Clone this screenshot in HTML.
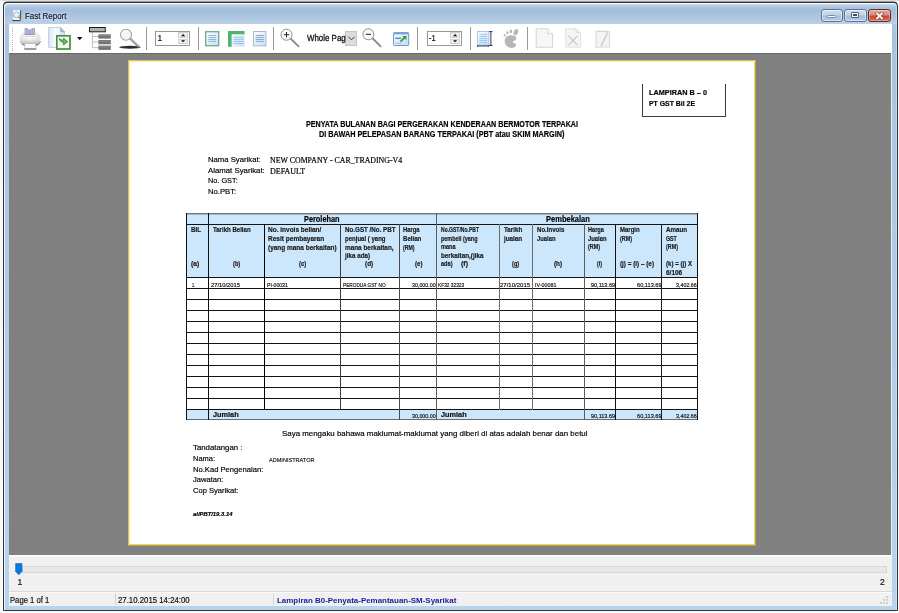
<!DOCTYPE html>
<html><head><meta charset="utf-8"><title>Fast Report</title>
<style>
html,body{margin:0;padding:0}
body{width:899px;height:613px;position:relative;overflow:hidden;background:linear-gradient(#dedede 0,#dedede 1px,#f8f8f8 1px);font-family:"Liberation Sans",sans-serif}
div,span,svg{position:absolute;box-sizing:border-box}
.t{white-space:nowrap;line-height:1;transform-origin:0 50%;color:#000;-webkit-text-stroke:.18px currentColor}
#win{left:3px;top:1px;width:895px;height:610px;border-radius:5px 5px 1px 1px;background:linear-gradient(#9a9c9e 0,#9a9c9e 1px,#30343a 1px)}
#frame{left:4px;top:3px;width:893px;height:607px;border-radius:4px 4px 0 0;box-shadow:inset 1px 1px 0 rgba(255,255,255,.75),inset -1px 0 0 rgba(255,255,255,.35);background:linear-gradient(#dfe9f4 0,#b3c9e2 3px,#a3bddb 7px,#a9c2de 12px,#bdd1e7 21px,#a9c3e0 22px,#aac4e0 60px,#b0cbe7 300px,#b8d3ec 607px)}
#client{left:9px;top:24px;width:883px;height:582px;background:#f0f0f0}
#tb{left:0;top:0;width:883px;height:29px;background:#fff}
#ws{left:0;top:29px;width:882px;height:502px;background:#808080;border-top:1px solid #6a6a6a}
#page{left:119px;top:6px;width:628px;height:486px;background:#fff;border:1px solid;border-color:#e2c260 #bf9f3e #bf9f3e #e2c260;box-shadow:inset 1px 1px 0 #f9ecb4,inset -1px -1px 0 #eed676}
.ln{background:#141414}
.hb{background:#cce6fb}
.sep{width:1px;top:3px;height:23px;background:#9a9a9a}
.cb{top:9px;height:13px;border:1px solid #5d7594;border-radius:3px}
#texts{left:0;top:0;width:899px;height:613px;will-change:transform}

</style></head>
<body>
<div id="win"></div>
<div id="frame"></div>
<!-- caption buttons -->
<div class="cb" style="left:821px;width:22px;background:linear-gradient(#cfdded 0,#bfd2e8 46%,#a6bedb 54%,#b4cae4 100%);box-shadow:inset 0 0 0 1px rgba(255,255,255,.5)"><div style="left:5px;top:5px;width:9px;height:3px;background:#fdfdfd;border:1px solid #7a88a0;border-radius:1.5px"></div></div>
<div class="cb" style="left:844px;width:23px;background:linear-gradient(#cfdded 0,#bfd2e8 46%,#a6bedb 54%,#b4cae4 100%);box-shadow:inset 0 0 0 1px rgba(255,255,255,.5)"><div style="left:6px;top:2px;width:8px;height:6px;background:#fff;border:1px solid #55627a;border-radius:1px"><div style="left:1px;top:1px;width:4px;height:2px;background:#3e4a60"></div></div></div>
<div class="cb" style="left:868px;width:23px;border-color:#5a2b2e;background:linear-gradient(#e5a697 0,#dc8a78 46%,#c9452b 54%,#d9735a 100%);box-shadow:inset 0 0 0 1px rgba(255,255,255,.35)">
<svg style="left:6px;top:2px" width="9" height="8" viewBox="0 0 9 8"><path d="M2 1.4 L7 6.4 M7 1.4 L2 6.4" stroke="#7a3a34" stroke-width="3" stroke-linecap="square"/><path d="M2 1.4 L7 6.4 M7 1.4 L2 6.4" stroke="#fff" stroke-width="1.9" stroke-linecap="square"/></svg></div>
<!-- app icon -->
<svg style="left:12px;top:9px" width="11" height="13" viewBox="0 0 11 13"><rect x="1" y="1" width="7.3" height="10" fill="#fbfdff" stroke="#b5c6dc" stroke-width=".5"/><path d="M8.6 1.2 V10.6" stroke="#2a3a60" stroke-width=".9"/><path d="M.4 11.6 H8.6" stroke="#26365a" stroke-width="1"/><circle cx="4.5" cy="5.8" r="2.9" fill="#e9f2fa" stroke="#8596ae" stroke-width=".8"/><path d="M6.6 8 L8.6 10.2" stroke="#b8841c" stroke-width="1.5"/></svg>

<div id="client">
 <div id="tb">
  <!-- grip -->
  <div style="left:3px;top:3px;width:1px;height:25px;background:repeating-linear-gradient(#b4b4b4 0,#b4b4b4 1px,#fff 1px,#fff 2.1px)"></div>
  <!-- ICONS -->
  <!-- printer (x=19,y=27) -->
<svg style="left:10px;top:3px" width="23" height="24" viewBox="0 0 23 24">
 <defs><linearGradient id="pb" x1="0" y1="0" x2="0" y2="1"><stop offset="0" stop-color="#efefef"/><stop offset=".55" stop-color="#e4e4e4"/><stop offset=".85" stop-color="#c9c9c9"/><stop offset="1" stop-color="#8a8a8a"/></linearGradient>
 <radialGradient id="pc" cx=".5" cy=".45" r=".5"><stop offset="0" stop-color="#fbfbfb"/><stop offset="1" stop-color="#fbfbfb" stop-opacity="0"/></radialGradient></defs>
 <path d="M1 14 Q2 19.2 8 19 H15 Q21 19 21.8 14Z" fill="#7d7d7d"/>
 <rect x=".4" y="4.8" width="21.3" height="13.2" rx="6.4" fill="url(#pb)"/>
 <ellipse cx="11" cy="11" rx="8" ry="4.5" fill="url(#pc)"/>
 <path d="M5.5 .9 H8.2 L10.7 3.1 L13.2 .9 H16 V7.5 H5.5Z" fill="#aaa7cd"/>
 <path d="M7 1.5V7M9 2.5V7M12.4 2.5V7M14.4 1.5V7" stroke="#c4c1de" stroke-width=".7"/>
 <path d="M5.5 7.5 H16" stroke="#8a88a8" stroke-width=".8"/>
 <rect x="5.8" y="16.6" width="11" height="5.4" fill="#fafafa" stroke="#b5b5b5" stroke-width=".6"/>
 <path d="M5.3 22 H17.3" stroke="#666" stroke-width="1.1"/>
 <path d="M6.2 9.5 H15.5" stroke="#d0d0d0" stroke-width=".7"/>
</svg>
<!-- export (x=48,y=27) -->
<svg style="left:39px;top:3px" width="24" height="24" viewBox="0 0 24 24">
 <defs><linearGradient id="eg" x1="0" y1="0" x2="1" y2="0"><stop offset="0" stop-color="#d9e6f6"/><stop offset=".45" stop-color="#fbfdff"/><stop offset="1" stop-color="#d3e2f4"/></linearGradient></defs>
 <path d="M.6 .6 H12.6 L16.6 5 V20.4 H.6Z" fill="url(#eg)" stroke="#b3c3da" stroke-width=".8"/>
 <path d="M12.6 .6 L16.6 5 H12.6Z" fill="#9dbbe0" stroke="#8fb0d8" stroke-width=".5"/>
 <rect x="8.8" y="8.8" width="13.2" height="13.2" fill="#eff8eb" stroke="#4b8c4b" stroke-width="1.7"/>
 <path d="M11.3 11.6 Q12 15.2 15.6 15.6 V17.9 L19.6 14.6 L15.6 11.3 V13.2 Q13.3 13.4 11.3 11.6Z" fill="#5fc45f" stroke="#2f7d2f" stroke-width=".8" stroke-linejoin="round"/>
</svg>
<svg style="left:68px;top:12.6px" width="6" height="4" viewBox="0 0 6 4"><path d="M0 0 H5.4 L2.7 3.2Z" fill="#111"/></svg>
<!-- tree (x=89,y=27) -->
<svg style="left:80px;top:3px" width="23" height="24" viewBox="0 0 23 24">
 <path d="M3.4 5 V20.7 H10 M3.4 9.5 H10 M3.4 15 H10" fill="none" stroke="#bdbdbd" stroke-width="1"/>
 <rect x=".5" y=".5" width="15.8" height="4.3" fill="#b2b2b2" stroke="#1e1e1e" stroke-width="1"/>
 <rect x="9.4" y="7.3" width="12.4" height="4.3" fill="#747474"/>
 <rect x="9.4" y="13" width="12.4" height="4.3" fill="#747474"/>
 <rect x="9.4" y="18.6" width="12.4" height="4.3" fill="#747474"/>
 <path d="M9.4 8.5H21.8M9.4 14.2H21.8M9.4 19.8H21.8" stroke="#8e8e8e" stroke-width=".8"/>
</svg>
<!-- find (x=119,y=29) -->
<svg style="left:110px;top:5px" width="23" height="21" viewBox="0 0 23 21">
 <ellipse cx="11" cy="18.2" rx="10.8" ry="1.5" fill="#2e2e2e"/>
 <path d="M11 9.2 L19.6 17.6" stroke="#8c8c8c" stroke-width="2.2" stroke-linecap="round"/>
 <path d="M11.4 9 L19.3 16.8" stroke="#d8d8d8" stroke-width=".8"/>
 <circle cx="7" cy="5.8" r="5.5" fill="#f4f4f4" stroke="#a2a2a2" stroke-width="1.1"/>
 <path d="M3.5 5 A3.6 3.6 0 0 1 8 2.2" stroke="#fff" stroke-width="1.2" fill="none"/>
</svg>
<!-- page icon 1 (x=205,y=31) -->
<svg style="left:196px;top:7px" width="15" height="16" viewBox="0 0 15 16">
 <defs><linearGradient id="pg" x1="0" y1="0" x2="1" y2="1"><stop offset="0" stop-color="#ffffff"/><stop offset="1" stop-color="#c6def4"/></linearGradient></defs>
 <rect x=".7" y=".7" width="13" height="14" fill="url(#pg)" stroke="#74a592" stroke-width="1.3"/>
 <path d="M3.3 4.5H11M3.3 6.5H11M3.3 8.5H11M3.3 10.4H11" stroke="#82b4dc" stroke-width=".9"/>
</svg>
<!-- page icon 2 green L (x=228,y=31) -->
<svg style="left:219px;top:7px" width="17" height="16" viewBox="0 0 17 16">
 <rect x="3" y="3" width="13.6" height="12.6" fill="url(#pg)"/>
 <path d="M5.4 6.2H15.6M5.4 8.3H15.6M5.4 10.4H15.6M5.4 12.5H15.6" stroke="#8bbbe8" stroke-width=".9"/>
 <path d="M0 0 H16.6 V3.2 H3.6 V15.7 H0Z" fill="#4fb372"/>
</svg>
<!-- page icon 3 (x=253,y=31) -->
<svg style="left:244px;top:7px" width="14" height="16" viewBox="0 0 14 16">
 <rect x=".5" y=".5" width="12.4" height="14.4" fill="url(#pg)" stroke="#acb8d4" stroke-width="1"/>
 <path d="M2.6 4.5H10.8M2.6 6.5H10.8M2.6 8.5H10.8M2.6 10.4H10.8" stroke="#7b9fc4" stroke-width=".9"/>
</svg>
<!-- zoom in (circle center 286.5,34.7) -->
<svg style="left:271px;top:4px" width="21" height="22" viewBox="0 0 21 22">
 <path d="M10.4 10.4 L18.6 18.4" stroke="#8a8a8a" stroke-width="1.9" stroke-linecap="round"/>
 <circle cx="6.5" cy="6.7" r="5.5" fill="#fafafa" stroke="#8e8e8e" stroke-width="1"/>
 <path d="M3.8 6.7H9.2M6.5 4V9.4" stroke="#222" stroke-width="1"/>
</svg>
<!-- zoom out (circle center 368.4,34.3) -->
<svg style="left:353px;top:4px" width="21" height="22" viewBox="0 0 21 22">
 <path d="M10.3 10 L18.6 18.4" stroke="#8a8a8a" stroke-width="1.9" stroke-linecap="round"/>
 <circle cx="6.4" cy="6.3" r="5.5" fill="#fafafa" stroke="#8e8e8e" stroke-width="1"/>
 <path d="M3.7 6.3H9.1" stroke="#222" stroke-width="1"/>
</svg>
<!-- fullscreen (x=393,y=32) -->
<svg style="left:384px;top:8px" width="17" height="15" viewBox="0 0 17 15">
 <defs><linearGradient id="fs" x1="0" y1="0" x2="1" y2="1"><stop offset="0" stop-color="#f6fbff"/><stop offset="1" stop-color="#c6dcf3"/></linearGradient></defs>
 <rect x=".5" y=".6" width="15.2" height="12.9" rx=".8" fill="url(#fs)" stroke="#4c84c2" stroke-width=".8"/>
 <rect x="1" y="1" width="14.2" height="1.3" fill="#6ea2d8"/>
 <path d="M2.2 6.2H8" stroke="#2c6cb8" stroke-width="1.1"/>
 <path d="M2 11.3H8.8" stroke="#a9bfd6" stroke-width=".9"/>
 <path d="M7.4 9.6 L11.6 5.6" stroke="#379a3c" stroke-width="1.7"/>
 <path d="M9.2 4.1 H13.4 V8.3Z" fill="#379a3c"/>
</svg>
<!-- page settings (x=477,y=31) -->
<svg style="left:468px;top:7px" width="17" height="17" viewBox="0 0 17 17">
 <rect x=".5" y=".5" width="11.4" height="13.6" fill="url(#pg)" stroke="#a9c6e8" stroke-width="1"/>
 <path d="M2.4 3.4H10M2.4 5.5H10M2.4 7.6H10M2.4 9.7H10M2.4 11.8H10" stroke="#8fc2f0" stroke-width=".9"/>
 <path d="M12 .6H15.6M12 14.4H15.6M13.9 .6V14.4" stroke="#3a3a4a" stroke-width="1"/>
 <path d="M0 14.9H11.8" stroke="#4a5a78" stroke-width="1.3"/>
 <path d="M.5 14V16M11.4 14V16" stroke="#4a5a78" stroke-width=".9"/>
</svg>
<!-- gnome foot (x=503,y=29) -->
<svg style="left:494px;top:5px" width="17" height="20" viewBox="0 0 17 20">
 <g fill="#b6b6b6">
 <ellipse cx="12.9" cy="3.2" rx="2.1" ry="3.3" transform="rotate(24 12.9 3.2)"/>
 <ellipse cx="7.9" cy="2.4" rx="1.3" ry="1.9" transform="rotate(10 7.9 2.4)"/>
 <ellipse cx="4.4" cy="3.8" rx="1.1" ry="1.6" transform="rotate(-14 4.4 3.8)"/>
 <ellipse cx="1.7" cy="6.3" rx="1" ry="1.4" transform="rotate(-34 1.7 6.3)"/>
 <path d="M8 6.3 C11.5 6 13.8 8 13.3 10 C12.9 11.8 10.2 11.6 9.8 13 C9.5 14.2 11.4 14.2 12.4 14.4 C13.6 14.7 13.2 17 11.6 18.2 C9.6 19.6 6 19.2 3.8 17 C1.4 14.6 .9 10.6 3 8.2 C4.3 6.8 6.2 6.4 8 6.3Z"/>
 </g>
</svg>
<!-- disabled page (x=535,y=28.4) -->
<svg style="left:526px;top:4px" width="19" height="21" viewBox="0 0 19 21">
 <path d="M1.2 .8 H12.6 L17.6 5.8 V19.2 H1.2Z" fill="#f7f7f7" stroke="#d4d4d4" stroke-width="1" stroke-linejoin="round"/>
 <path d="M12.6 .8 V5.8 H17.6" fill="#fdfdfd" stroke="#d4d4d4" stroke-width=".9"/>
</svg>
<!-- disabled page x (x=565,y=28.4) -->
<svg style="left:556px;top:4px" width="17" height="21" viewBox="0 0 17 21">
 <path d="M.8 .8 H11 L15.6 4.6 V19.2 H.8Z" fill="#f5f5f5" stroke="#dedede" stroke-width=".9"/>
 <path d="M11 .8 V4.6 H15.6" fill="#ececec" stroke="#dadada" stroke-width=".7"/>
 <path d="M3.4 7.6 L12.6 17.4 M12.6 7.6 L3.4 17.4" stroke="#c6c6c6" stroke-width="1.1"/>
</svg>
<!-- disabled note (x=595,y=30) -->
<svg style="left:584.6px;top:6px" width="18" height="19" viewBox="0 0 18 19">
 <path d="M2 1.6 H15.6 V17 H5 L2 18Z" fill="#f4f4f4" stroke="#d8d8d8" stroke-width="1"/>
 <path d="M3 1.2 H15" stroke="#cfcfcf" stroke-width="1.2" stroke-dasharray="1 1"/>
 <path d="M13.6 2.6 L7 16" stroke="#cdcdcd" stroke-width="1.6"/>
</svg>

  <div class="sep" style="left:137px"></div>
  <div class="sep" style="left:189px"></div>
  <div class="sep" style="left:264px"></div>
  <div class="sep" style="left:408px"></div>
  <div class="sep" style="left:461px"></div>
  <div class="sep" style="left:518px"></div>
  <!-- spin 1 -->
  <div style="left:146px;top:7px;width:35px;height:15px;border:1px solid #979797;background:#fff">
    <div style="left:22px;top:0;width:10px;height:5.5px;border:1px solid #d2d2d2;background:#ececec"></div>
    <div style="left:22px;top:6.5px;width:10px;height:5.5px;border:1px solid #d2d2d2;background:#ececec"></div>
    <svg style="left:25px;top:1.8px" width="5" height="9" viewBox="0 0 5 9"><path d="M0 2.2 L2.1 0 L4.2 2.2Z M0 6.2 L2.1 8.3 L4.2 6.2Z" fill="#111"/></svg>
  </div>
  <!-- spin 2 -->
  <div style="left:418px;top:7px;width:35px;height:15px;border:1px solid #979797;background:#fff">
    <div style="left:22px;top:0;width:10px;height:5.5px;border:1px solid #d2d2d2;background:#ececec"></div>
    <div style="left:22px;top:6.5px;width:10px;height:5.5px;border:1px solid #d2d2d2;background:#ececec"></div>
    <svg style="left:25px;top:1.8px" width="5" height="9" viewBox="0 0 5 9"><path d="M0 2.2 L2.1 0 L4.2 2.2Z M0 6.2 L2.1 8.3 L4.2 6.2Z" fill="#111"/></svg>
  </div>
  <!-- combo button -->
  <div style="left:336px;top:7px;width:12px;height:15px;background:#dcdcdc;border:1px solid #c4c4c4"><svg style="left:2px;top:4px" width="7" height="5" viewBox="0 0 7 5"><path d="M.5 .8 L3.5 3.8 L6.5 .8" fill="none" stroke="#333" stroke-width="1"/></svg></div>
 </div>
 <div id="ws">
  <div id="page"></div>
 </div>
 <div style="left:0;top:531px;width:883px;height:2px;background:linear-gradient(#fdfdfd 50%,#f7f7f7 50%)"></div>
 <!-- slider -->
 <div style="left:13px;top:542px;width:865px;height:7px;background:#e7e7e7;border:1px solid #d6d6d6"></div>
 <svg style="left:6px;top:539px" width="9" height="13" viewBox="0 0 9 13"><path d="M.6 .5 H7 V8.5 L3.8 11.8 L.6 8.5Z" fill="#0a78d6" stroke="#0a6cc4" stroke-width=".6"/></svg>
 <!-- status bar -->
 <div style="left:0;top:567px;width:883px;height:1px;background:#d9d9d9"></div>
 <div style="left:0;top:568px;width:883px;height:1px;background:#fafafa"></div>
 <div style="left:106px;top:570px;width:1px;height:11px;background:#d0d0d0"></div>
 <div style="left:264px;top:570px;width:1px;height:11px;background:#d8d8d8"></div>
 <svg style="left:869px;top:570px" width="11" height="11" viewBox="0 0 11 11"><g fill="#cfcfcf"><rect x="8" y="8" width="2" height="2"/><rect x="5" y="8" width="2" height="2"/><rect x="8" y="5" width="2" height="2"/><rect x="2" y="8" width="2" height="2"/><rect x="5" y="5" width="2" height="2"/><rect x="8" y="2" width="2" height="2"/></g></svg>
</div>
<!-- TABLE -->
<div class="hb" style="left:186px;top:213px;width:512px;height:64px"></div>
<div class="hb" style="left:186px;top:409px;width:512px;height:11px"></div>
<div class="ln" style="left:186px;top:213px;width:512px;height:2px;background:linear-gradient(#6f7a80 50%,#a4b6c2 50%)"></div>
<div class="ln" style="left:186px;top:224px;width:512px;height:1px"></div>
<div class="ln" style="left:186px;top:277px;width:512px;height:1px"></div>
<div class="ln" style="left:186px;top:288px;width:512px;height:1px"></div>
<div class="ln" style="left:186px;top:299px;width:512px;height:1px"></div>
<div class="ln" style="left:186px;top:310px;width:512px;height:1px"></div>
<div class="ln" style="left:186px;top:321px;width:512px;height:1px"></div>
<div class="ln" style="left:186px;top:332px;width:512px;height:1px"></div>
<div class="ln" style="left:186px;top:343px;width:512px;height:1px"></div>
<div class="ln" style="left:186px;top:354px;width:512px;height:1px"></div>
<div class="ln" style="left:186px;top:365px;width:512px;height:1px"></div>
<div class="ln" style="left:186px;top:376px;width:512px;height:1px"></div>
<div class="ln" style="left:186px;top:387px;width:512px;height:1px"></div>
<div class="ln" style="left:186px;top:398px;width:512px;height:1px"></div>
<div class="ln" style="left:186px;top:409px;width:512px;height:1px"></div>
<div class="ln" style="left:186px;top:419px;width:512px;height:1px;background:#6a6a6a"></div>
<div class="ln" style="left:186px;top:213px;width:1px;height:207px;background:#111"></div>
<div class="ln" style="left:208px;top:213px;width:1px;height:207px;background:#111"></div>
<div class="ln" style="left:264px;top:224px;width:1px;height:186px;background:#000"></div>
<div class="ln" style="left:340px;top:224px;width:1px;height:186px;background:#3c3c3c"></div>
<div class="ln" style="left:399px;top:224px;width:1px;height:196px;background:#4a4a4a"></div>
<div class="ln" style="left:436px;top:213px;width:1px;height:207px;background:#5c5c5c"></div>
<div class="ln" style="left:499px;top:224px;width:1px;height:186px;background:#6c6c6c"></div>
<div class="ln" style="left:532px;top:224px;width:1px;height:186px;background:#6c6c6c"></div>
<div class="ln" style="left:584px;top:224px;width:1px;height:196px;background:#5c5c5c"></div>
<div class="ln" style="left:615px;top:224px;width:1px;height:196px;background:#111"></div>
<div class="ln" style="left:661px;top:224px;width:1px;height:196px;background:#1c1c1c"></div>
<div class="ln" style="left:697px;top:213px;width:1px;height:207px;background:#111"></div>
<div class="ln" style="left:642px;top:84px;width:1px;height:33px;background:#3a3a3a"></div>
<div class="ln" style="left:725px;top:84px;width:1px;height:33px;background:#3a3a3a"></div>
<div class="ln" style="left:642px;top:116px;width:84px;height:1px;background:#3a3a3a"></div>

<div id="texts">
<span class="t" style='left:24.60px;top:11px;font-size:9.4px;color:#0b1230;text-shadow:0 0 3px rgba(255,255,255,.9),0 0 5px rgba(255,255,255,.6);transform:scaleX(0.8452);'>Fast Report</span>
<span class="t" style='left:157.60px;top:34px;font-size:8.4px;color:#111;'>1</span>
<span class="t" style='left:307.00px;top:34px;font-size:9px;color:#111;-webkit-text-stroke:.3px #111;transform:scaleX(0.8789);'>Whole Pag</span>
<span class="t" style='left:429.00px;top:34px;font-size:8.4px;color:#111;transform:scaleX(0.8990);'>-1</span>
<span class="t" style='left:17.40px;top:578px;font-size:8.6px;color:#111;'>1</span>
<span class="t" style='left:880.00px;top:578px;font-size:8.6px;color:#111;'>2</span>
<span class="t" style='left:10.00px;top:596px;font-size:8.3px;color:#111;transform:scaleX(0.9257);'>Page 1 of 1</span>
<span class="t" style='left:118.30px;top:596px;font-size:8.3px;color:#111;transform:scaleX(0.9417);'>27.10.2015 14:24:00</span>
<span class="t" style='left:276.70px;top:597px;font-size:7.8px;font-weight:700;color:#1a1a9a;-webkit-text-stroke:0;transform:scaleX(1.0192);'>Lampiran B0-Penyata-Pemantauan-SM-Syarikat</span>
<span class="t" style='left:649.00px;top:89px;font-size:7px;font-weight:700;transform:scaleX(1.0427);'>LAMPIRAN B – 0</span>
<span class="t" style='left:649.00px;top:100px;font-size:7px;font-weight:700;transform:scaleX(0.9853);'>PT GST Bil 2E</span>
<span class="t" style='left:306.30px;top:120px;font-size:8.4px;font-weight:700;transform:scaleX(0.8555);'>PENYATA BULANAN BAGI PERGERAKAN KENDERAAN BERMOTOR TERPAKAI</span>
<span class="t" style='left:318.80px;top:130px;font-size:8.4px;font-weight:700;transform:scaleX(0.8702);'>DI BAWAH PELEPASAN BARANG TERPAKAI (PBT atau SKIM MARGIN)</span>
<span class="t" style='left:207.80px;top:156px;font-size:8.0px;transform:scaleX(0.9637);'>Nama Syarikat:</span>
<span class="t" style='left:207.80px;top:167px;font-size:8.0px;transform:scaleX(0.9751);'>Alamat Syarikat:</span>
<span class="t" style='left:207.80px;top:177px;font-size:8.0px;transform:scaleX(0.9152);'>No. GST:</span>
<span class="t" style='left:207.80px;top:188px;font-size:8.0px;transform:scaleX(0.9610);'>No.PBT:</span>
<span class="t" style='left:270.00px;top:157px;font-size:7.5px;font-family:"Liberation Serif", serif;transform:scaleX(1.0476);'>NEW COMPANY - CAR_TRADING-V4</span>
<span class="t" style='left:270.00px;top:168px;font-size:7.5px;font-family:"Liberation Serif", serif;transform:scaleX(1.0631);'>DEFAULT</span>
<span class="t" style='left:304.40px;top:215px;font-size:8.5px;font-weight:700;transform:scaleX(0.8660);'>Perolehan</span>
<span class="t" style='left:545.60px;top:215px;font-size:8.5px;font-weight:700;transform:scaleX(0.8846);'>Pembekalan</span>
<span class="t" style='left:190.70px;top:227px;font-size:6.8px;font-weight:700;color:#1a1a1a;transform:scaleX(0.9221);'>BIL</span>
<span class="t" style='left:190.70px;top:261px;font-size:6.8px;font-weight:700;color:#1a1a1a;transform:scaleX(0.9744);'>(a)</span>
<span class="t" style='left:213.30px;top:227px;font-size:6.8px;font-weight:700;color:#1a1a1a;transform:scaleX(0.8913);'>Tarikh Belian</span>
<span class="t" style='left:233.00px;top:261px;font-size:6.8px;font-weight:700;color:#1a1a1a;transform:scaleX(0.8288);'>(b)</span>
<span class="t" style='left:267.60px;top:227px;font-size:6.8px;font-weight:700;color:#1a1a1a;transform:scaleX(0.9552);'>No. invois belian/</span>
<span class="t" style='left:267.60px;top:236px;font-size:6.8px;font-weight:700;color:#1a1a1a;transform:scaleX(0.9597);'>Resit pembayaran</span>
<span class="t" style='left:267.60px;top:245px;font-size:6.8px;font-weight:700;color:#1a1a1a;transform:scaleX(0.9507);'>(yang mana berkaitan)</span>
<span class="t" style='left:298.60px;top:261px;font-size:6.8px;font-weight:700;color:#1a1a1a;transform:scaleX(0.8662);'>(c)</span>
<span class="t" style='left:344.90px;top:227px;font-size:6.8px;font-weight:700;color:#1a1a1a;transform:scaleX(0.9177);'>No.GST /No. PBT</span>
<span class="t" style='left:344.90px;top:236px;font-size:6.8px;font-weight:700;color:#1a1a1a;transform:scaleX(0.8862);'>penjual ( yang</span>
<span class="t" style='left:344.90px;top:245px;font-size:6.8px;font-weight:700;color:#1a1a1a;transform:scaleX(0.9388);'>mana berkaitan,</span>
<span class="t" style='left:344.90px;top:253px;font-size:6.8px;font-weight:700;color:#1a1a1a;transform:scaleX(0.9227);'>jika ada)</span>
<span class="t" style='left:365.00px;top:261px;font-size:6.8px;font-weight:700;color:#1a1a1a;transform:scaleX(0.9439);'>(d)</span>
<span class="t" style='left:402.70px;top:227px;font-size:6.8px;font-weight:700;color:#1a1a1a;transform:scaleX(0.8564);'>Harga</span>
<span class="t" style='left:402.70px;top:236px;font-size:6.8px;font-weight:700;color:#1a1a1a;transform:scaleX(0.8968);'>Belian</span>
<span class="t" style='left:402.70px;top:245px;font-size:6.8px;font-weight:700;color:#1a1a1a;transform:scaleX(0.7677);'>(RM)</span>
<span class="t" style='left:414.90px;top:261px;font-size:6.8px;font-weight:700;color:#1a1a1a;transform:scaleX(0.9023);'>(e)</span>
<span class="t" style='left:441.00px;top:227px;font-size:6.8px;font-weight:700;color:#1a1a1a;transform:scaleX(0.7399);'>No.GST/No.PBT</span>
<span class="t" style='left:441.00px;top:236px;font-size:6.8px;font-weight:700;color:#1a1a1a;transform:scaleX(0.7986);'>pembeli (yang</span>
<span class="t" style='left:441.00px;top:244px;font-size:6.8px;font-weight:700;color:#1a1a1a;transform:scaleX(0.8162);'>mana</span>
<span class="t" style='left:441.00px;top:253px;font-size:6.8px;font-weight:700;color:#1a1a1a;transform:scaleX(0.9296);'>berkaitan,(jika</span>
<span class="t" style='left:441.00px;top:261px;font-size:6.8px;font-weight:700;color:#1a1a1a;transform:scaleX(0.8223);'>ada)</span>
<span class="t" style='left:460.50px;top:261px;font-size:6.8px;font-weight:700;color:#1a1a1a;transform:scaleX(1.0299);'>(f)</span>
<span class="t" style='left:504.20px;top:227px;font-size:6.8px;font-weight:700;color:#1a1a1a;transform:scaleX(0.9143);'>Tarikh</span>
<span class="t" style='left:504.20px;top:236px;font-size:6.8px;font-weight:700;color:#1a1a1a;transform:scaleX(0.9267);'>jualan</span>
<span class="t" style='left:512.30px;top:261px;font-size:6.8px;font-weight:700;color:#1a1a1a;transform:scaleX(0.8288);'>(g)</span>
<span class="t" style='left:537.00px;top:227px;font-size:6.8px;font-weight:700;color:#1a1a1a;transform:scaleX(0.8956);'>No.Invois</span>
<span class="t" style='left:537.00px;top:236px;font-size:6.8px;font-weight:700;color:#1a1a1a;transform:scaleX(0.8586);'>Jualan</span>
<span class="t" style='left:553.70px;top:261px;font-size:6.8px;font-weight:700;color:#1a1a1a;transform:scaleX(0.9324);'>(h)</span>
<span class="t" style='left:587.50px;top:227px;font-size:6.8px;font-weight:700;color:#1a1a1a;transform:scaleX(0.8253);'>Harga</span>
<span class="t" style='left:587.50px;top:236px;font-size:6.8px;font-weight:700;color:#1a1a1a;transform:scaleX(0.8586);'>Jualan</span>
<span class="t" style='left:587.50px;top:244px;font-size:6.8px;font-weight:700;color:#1a1a1a;transform:scaleX(0.7942);'>(RM)</span>
<span class="t" style='left:597.00px;top:261px;font-size:6.8px;font-weight:700;color:#1a1a1a;transform:scaleX(0.7786);'>(i)</span>
<span class="t" style='left:620.00px;top:227px;font-size:6.8px;font-weight:700;color:#1a1a1a;transform:scaleX(0.8797);'>Margin</span>
<span class="t" style='left:620.00px;top:236px;font-size:6.8px;font-weight:700;color:#1a1a1a;transform:scaleX(0.7942);'>(RM)</span>
<span class="t" style='left:620.00px;top:261px;font-size:6.8px;font-weight:700;color:#1a1a1a;transform:scaleX(0.9327);'>(j) = (i) – (e)</span>
<span class="t" style='left:666.20px;top:227px;font-size:6.8px;font-weight:700;color:#1a1a1a;transform:scaleX(0.9155);'>Amaun</span>
<span class="t" style='left:666.20px;top:236px;font-size:6.8px;font-weight:700;color:#1a1a1a;transform:scaleX(0.7723);'>GST</span>
<span class="t" style='left:666.20px;top:244px;font-size:6.8px;font-weight:700;color:#1a1a1a;transform:scaleX(0.7942);'>(RM)</span>
<span class="t" style='left:666.20px;top:261px;font-size:6.8px;font-weight:700;color:#1a1a1a;transform:scaleX(0.8999);'>(k) = (j) X</span>
<span class="t" style='left:666.20px;top:270px;font-size:6.8px;font-weight:700;color:#1a1a1a;transform:scaleX(0.9521);'>6/106</span>
<span class="t" style='left:191.60px;top:282px;font-size:6px;color:#111;transform:scaleX(0.6380);'>1.</span>
<span class="t" style='left:211.20px;top:282px;font-size:6px;color:#111;transform:scaleX(0.9657);'>27/10/2015</span>
<span class="t" style='left:266.80px;top:282px;font-size:6px;color:#111;transform:scaleX(0.8539);'>PI-00031</span>
<span class="t" style='left:343.40px;top:282px;font-size:6px;color:#111;transform:scaleX(0.7903);'>PERODUA GST NO</span>
<span class="t" style='left:412.30px;top:282px;font-size:6px;color:#111;transform:scaleX(0.8875);'>30,000.00</span>
<span class="t" style='left:437.50px;top:282px;font-size:6px;color:#111;transform:scaleX(0.8011);'>KF32 32323</span>
<span class="t" style='left:500.20px;top:282px;font-size:6px;color:#111;transform:scaleX(1.0023);'>27/10/2015</span>
<span class="t" style='left:534.90px;top:282px;font-size:6px;color:#111;transform:scaleX(0.8905);'>IV-00081</span>
<span class="t" style='left:591.00px;top:282px;font-size:6px;color:#111;transform:scaleX(0.9143);'>90,113.69</span>
<span class="t" style='left:636.70px;top:282px;font-size:6px;color:#111;transform:scaleX(0.9371);'>60,113.69</span>
<span class="t" style='left:675.80px;top:282px;font-size:6px;color:#111;transform:scaleX(0.8904);'>3,402.66</span>
<span class="t" style='left:212.80px;top:411px;font-size:7.4px;font-weight:700;color:#111;transform:scaleX(0.9894);'>Jumlah</span>
<span class="t" style='left:441.40px;top:411px;font-size:7.4px;font-weight:700;color:#111;transform:scaleX(0.9894);'>Jumlah</span>
<span class="t" style='left:412.30px;top:413px;font-size:6px;color:#111;transform:scaleX(0.8875);'>30,000.00</span>
<span class="t" style='left:591.00px;top:413px;font-size:6px;color:#111;transform:scaleX(0.9143);'>90,113.69</span>
<span class="t" style='left:636.70px;top:413px;font-size:6px;color:#111;transform:scaleX(0.9371);'>60,113.69</span>
<span class="t" style='left:675.80px;top:413px;font-size:6px;color:#111;transform:scaleX(0.8904);'>3,402.66</span>
<span class="t" style='left:281.50px;top:430px;font-size:8.0px;transform:scaleX(0.9884);'>Saya mengaku bahawa maklumat-maklumat yang diberi di atas adalah benar dan betul</span>
<span class="t" style='left:193.00px;top:444px;font-size:8.0px;transform:scaleX(0.9740);'>Tandatangan :</span>
<span class="t" style='left:193.00px;top:455px;font-size:8.0px;transform:scaleX(0.9337);'>Nama:</span>
<span class="t" style='left:193.00px;top:466px;font-size:8.0px;transform:scaleX(0.9520);'>No.Kad Pengenalan:</span>
<span class="t" style='left:193.00px;top:476px;font-size:8.0px;transform:scaleX(0.9460);'>Jawatan:</span>
<span class="t" style='left:193.00px;top:487px;font-size:8.0px;transform:scaleX(0.9452);'>Cop Syarikat:</span>
<span class="t" style='left:268.50px;top:457px;font-size:6px;color:#222;transform:scaleX(0.9262);'>ADMINISTRATOR</span>
<span class="t" style='left:192.80px;top:513px;font-size:4.8px;font-weight:700;font-style:italic;transform:scaleX(1.2211);'>al/PBT/19.3.14</span>
</div>
</body></html>
